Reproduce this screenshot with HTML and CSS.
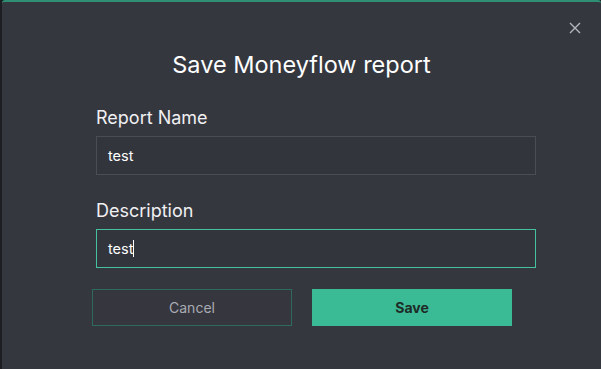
FILE: index.html
```html
<!DOCTYPE html>
<html>
<head>
<meta charset="utf-8">
<link rel="stylesheet" href="styles.css">
</head>
<body>
<div class="page">
  <div class="backdrop-strip"></div>
  <div class="modal">
    <button class="close" aria-label="Close">
      <svg width="12" height="12" viewBox="0 0 12 12"><path d="M1 1L11 11M11 1L1 11" stroke="#b4b6bd" stroke-width="1.4" fill="none"/></svg>
    </button>
    <h1 class="title">Save Moneyflow report</h1>
    <div class="form">
      <label class="label">Report Name</label>
      <div class="input">test</div>
      <label class="label label-second">Description</label>
      <div class="input input-focus">test<span class="caret"></span></div>
    </div>
    <div class="actions">
      <button class="btn btn-cancel">Cancel</button>
      <button class="btn btn-save">Save</button>
    </div>
  </div>
</div>
</body>
</html>
```
FILE: styles.css
```css
html, body {
  margin: 0;
  padding: 0;
  width: 601px;
  height: 369px;
  overflow: hidden;
  background: #1d1e24;
  font-family: Inter, "Noto Sans", sans-serif;
}
.page {
  display: flex;
  height: 369px;
}
.backdrop-strip {
  width: 2px;
  flex: none;
  background: #1d1e24;
}
.modal {
  position: relative;
  flex: 1;
  background: #35373f;
  border-top: 2px solid #2f8f74;
  border-top-left-radius: 3px;
  border-top-right-radius: 3px;
  box-sizing: border-box;
  height: 369px;
}
.close {
  position: absolute;
  top: 20px;
  right: 20px;
  background: none;
  border: none;
  padding: 0;
  width: 12px;
  height: 12px;
  display: flex;
}
.title {
  margin: 0;
  padding-top: 49px;
  text-align: center;
  color: #ffffff;
  font-size: 23.5px;
  font-weight: 400;
  line-height: 28px;
  letter-spacing: 0;
}
.form {
  display: flex;
  flex-direction: column;
  margin: 28px 0 0 94px;
  width: 440px;
}
.label {
  color: #f0f0f2;
  font-size: 18px;
  line-height: 22px;
  margin-bottom: 7px;
}
.label-second {
  margin-top: 25px;
}
.input {
  height: 39px;
  box-sizing: border-box;
  border: 1px solid #4b4d56;
  background: #33353d;
  color: #ffffff;
  font-size: 14.5px;
  display: flex;
  align-items: center;
  padding-left: 11px;
}
.input-focus {
  border-color: #45c29d;
}
.caret {
  display: inline-block;
  width: 1px;
  height: 17px;
  background: #ffffff;
  margin-left: 0;
}
.actions {
  display: flex;
  gap: 20px;
  margin: 21px 0 0 90px;
}
.btn {
  width: 200px;
  height: 37px;
  box-sizing: border-box;
  font-family: Inter, "Noto Sans", sans-serif;
  font-size: 14px;
  cursor: pointer;
}
.btn-cancel {
  background: #36363f;
  border: 1px solid #2e6a5c;
  color: #a9abb2;
}
.btn-save {
  background: #3bbb95;
  border: none;
  color: #1d2a26;
  font-weight: 700;
}
```
